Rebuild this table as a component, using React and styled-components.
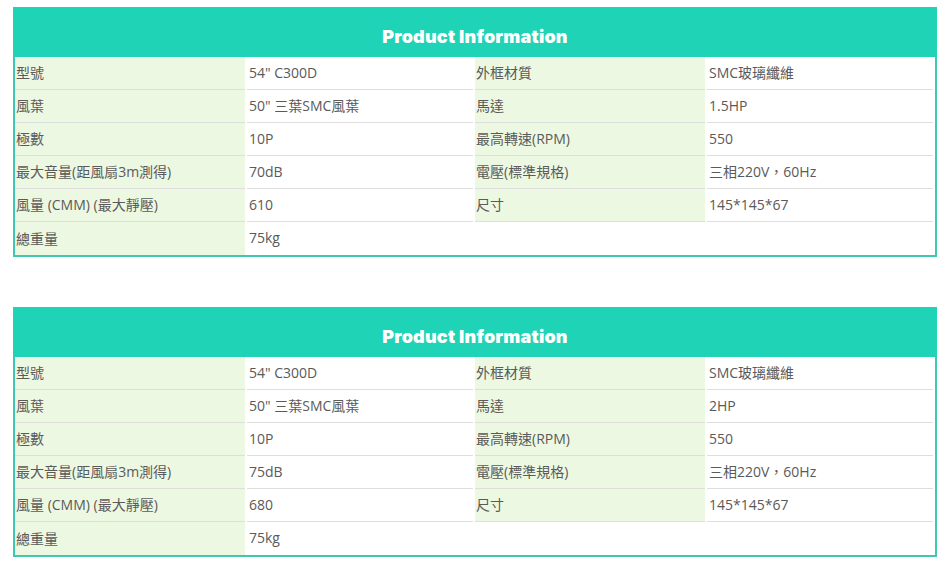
import React from 'react'
import styled, { createGlobalStyle } from 'styled-components'

const Global = createGlobalStyle`
  body {
    margin: 0;
    background: #fff;
    font-family: "Open Sans", "Noto Sans CJK TC", sans-serif;
  }
`

const Page = styled.div`
  display: flex;
  flex-direction: column;
  gap: 50px;
  padding: 7px 14px 0 13px;
`

const Panel = styled.section`
  width: 924px;
`

const Header = styled.h2`
  margin: 0;
  height: 50px;
  display: flex;
  align-items: center;
  justify-content: center;
  background: #1fd3b6;
  color: #fff;
  font-family: Inter, "Liberation Sans", sans-serif;
  font-weight: 900;
  font-size: 18px;
  letter-spacing: 0.2px;
  padding-top: 8px;
  box-sizing: border-box;
`

const Grid = styled.div`
  display: grid;
  grid-template-columns: 230px 226px 230px 226px;
  column-gap: 2px;
  padding-right: 2px;
  border: 2px solid #3ec8b0;
  border-top: none;
`

const Cell = styled.div`
  height: 33px;
  box-sizing: border-box;
  display: flex;
  align-items: center;
  font-size: 14px;
  color: #5a5a5a;
  background: ${p => (p.$label ? '#edf8e2' : '#fff')};
  border-bottom: ${p => (p.$last ? 'none' : '1px solid #dedede')};
  padding-left: ${p => (p.$label ? '1px' : '2px')};
  padding-bottom: 2px;
  white-space: nowrap;
`

function SpecTable({ rows, last }) {
  return (
    <Panel>
      <Header>Product Information</Header>
      <Grid>
        {rows.map(([a, b, c, d], i) => (
          <React.Fragment key={i}>
            <Cell $label>{a}</Cell>
            <Cell>{b}</Cell>
            {c ? <Cell $label>{c}</Cell> : <Cell $last />}
            {c ? <Cell>{d}</Cell> : <Cell $last />}
          </React.Fragment>
        ))}
        <Cell $label $last>總重量</Cell>
        <Cell $last>{last}</Cell>
        <Cell $last />
        <Cell $last />
      </Grid>
    </Panel>
  )
}

const first = [
  ['型號', '54" C300D', '外框材質', 'SMC玻璃纖維'],
  ['風葉', '50" 三葉SMC風葉', '馬達', '1.5HP'],
  ['極數', '10P', '最高轉速(RPM)', '550'],
  ['最大音量(距風扇3m測得)', '70dB', '電壓(標準規格)', '三相220V，60Hz'],
  ['風量 (CMM) (最大靜壓)', '610', '尺寸', '145*145*67'],
]

const second = [
  ['型號', '54" C300D', '外框材質', 'SMC玻璃纖維'],
  ['風葉', '50" 三葉SMC風葉', '馬達', '2HP'],
  ['極數', '10P', '最高轉速(RPM)', '550'],
  ['最大音量(距風扇3m測得)', '75dB', '電壓(標準規格)', '三相220V，60Hz'],
  ['風量 (CMM) (最大靜壓)', '680', '尺寸', '145*145*67'],
]

export default function App() {
  return (
    <>
      <Global />
      <Page>
        <SpecTable rows={first} last="75kg" />
        <SpecTable rows={second} last="75kg" />
      </Page>
    </>
  )
}
